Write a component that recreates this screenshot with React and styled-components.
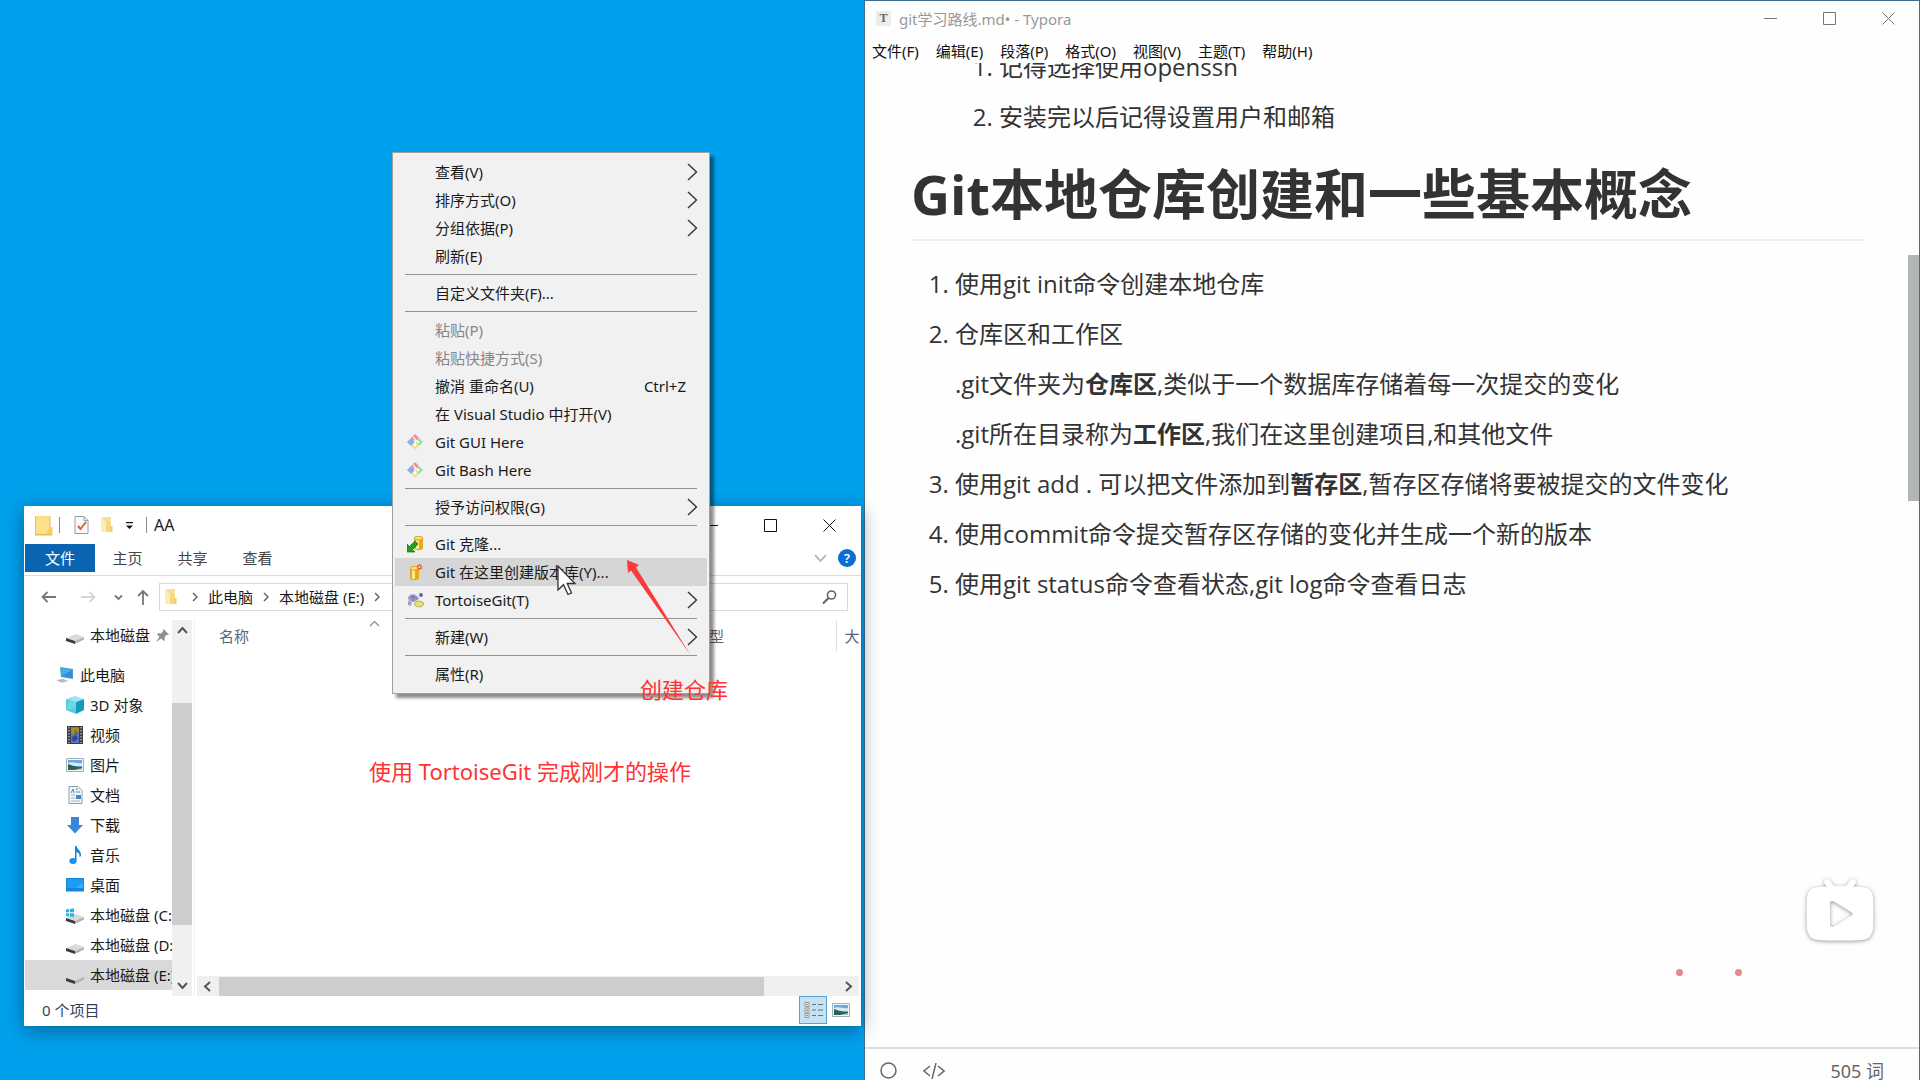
// App.jsx
import React from "react";
import styled, { createGlobalStyle } from "styled-components";

const GlobalStyle = createGlobalStyle`
  * {
    box-sizing: border-box;
  }
  body {
    margin: 0;
    overflow: hidden;
    font-family: "Noto Sans", "Noto Sans CJK SC", sans-serif;
    font-size: 15px;
    line-height: 20px;
    color: #1a1a1a;
  }
  button, input {
    font: inherit;
    color: inherit;
    border: 0;
    padding: 0;
    margin: 0;
    background: none;
  }
  svg {
    display: block;
    flex-shrink: 0;
  }
`;

/* ---------- icons ---------- */

const Line = ({ d, w = 16, h = 16, color = "#555", width = 1.5 }) => (
  <svg width={w} height={h} viewBox={`0 0 ${w} ${h}`} fill="none" stroke={color} strokeWidth={width}>
    <path d={d} />
  </svg>
);

const ChevronRight = () => <Line w={6} h={10} d="M1 1l4 4-4 4" color="#666" />;
const SubmenuArrow = () => <Line w={11} h={18} d="M1 1l8.500 8-8.500 8" color="#333" width={1.4} />;

const FolderIcon = () => (
  <svg width="18" height="21" viewBox="0 0 18 21">
    <path d="M0 1h15v19H0z" fill="#fbd978" />
    <path d="M1 2h13v17H1z" fill="#fde08a" />
    <path d="M14 12h3.500v8H11z" fill="#f6cf62" />
    <path d="M0 19h17v1.500H0z" fill="#e9bd50" />
    <path d="M.5 1v19M15 1v11" stroke="#e6c264" />
  </svg>
);

const SmallFolderIcon = () => (
  <svg width="12" height="16" viewBox="0 0 12 16">
    <path d="M1 0h9v15H1z" fill="#fbe09a" />
    <path d="M0 1l5 3v12l-5-2z" fill="#fdebb4" />
    <path d="M9 9h2.500v6H7z" fill="#f3cc6c" />
    <path d="M5 4h4v11H5z" fill="#f8d784" />
  </svg>
);

const CheckPageIcon = () => (
  <svg width="15" height="18" viewBox="0 0 15 18">
    <path d="M1 .5h9l4 4v13H1z" fill="#fbfbfd" stroke="#9a9aa6" />
    <path d="M10 .5v4h4" fill="none" stroke="#9a9aa6" />
    <path d="M4 10l2.500 3L12 6" fill="none" stroke="#d8602c" strokeWidth="2" />
  </svg>
);

const DriveShape = () => (
  <>
    <path d="M0 13l10-4 8 3-9 4z" fill="#dadada" />
    <path d="M0 13l9 3v3l-9-3z" fill="#3a3a3a" />
    <path d="M9 16l9-4v2.500L9 19z" fill="#b2b2b2" />
  </>
);

const DriveIcon = () => (
  <svg width="18" height="20" viewBox="0 0 18 20"><DriveShape /></svg>
);

const SystemDriveIcon = () => (
  <svg width="18" height="20" viewBox="0 0 18 20">
    <DriveShape />
    <path d="M0 4.500l3.200-.5v3.300H0zM4 3.900l4-.6v4H4zM0 8.200h3.200v3.300L0 11zM4 8.200h4v4l-4-.6z" fill="#20b8ea" />
  </svg>
);

const ComputerIcon = () => (
  <svg width="18" height="18" viewBox="0 0 18 18">
    <path d="M4 1l13 2v10L5 11z" fill="#5a93bd" />
    <path d="M5 2l11 2v8L6 10z" fill="#39b0f0" />
    <path d="M6 10L16 4v8z" fill="#2791d6" />
    <path d="M0 14l8-1 5 2-7 2z" fill="#cfd5da" />
    <path d="M2 14.500l6-.8M4 15.500l6-.8" stroke="#98a2ab" strokeWidth=".8" />
  </svg>
);

const CubeIcon = () => (
  <svg width="18" height="18" viewBox="0 0 18 18">
    <path d="M0 3l9-3 9 3-8 3z" fill="#9de4f0" />
    <path d="M0 3l10 3v12l-10-4z" fill="#57cbe0" />
    <path d="M10 6l8-3v11l-8 4z" fill="#129dbb" />
    <path d="M4 1.700L10 6v6L0 14z" fill="#7edbeb" opacity=".6" />
  </svg>
);

const VideoIcon = () => (
  <svg width="16" height="18" viewBox="0 0 16 18">
    <path d="M0 0h16v18H0z" fill="#3c3c44" />
    <path d="M4 1h8v16H4z" fill="#5b74c4" />
    <path d="M4 2h8v4l-4 3-4-2z" fill="#b08a2c" />
    <path d="M8 3l3 4-4 3z" fill="#4b7d36" />
    <path d="M5 11l4-2 2 4-5 3z" fill="#2e4694" />
    <path d="M2 1v16M14 1v16" stroke="#aaa" strokeWidth="1.500" strokeDasharray="1.500 1.500" />
  </svg>
);

const PictureIcon = () => (
  <svg width="18" height="14" viewBox="0 0 18 14">
    <path d="M.5.5h17v13H.5z" fill="#f4f8fa" stroke="#9fb0b8" />
    <path d="M2 2h14v10H2z" fill="#6aa7e0" />
    <path d="M2 5c5-2 9 1 14 0v3H2z" fill="#d7e9f5" />
    <path d="M2 6c4 1 7 3 14 3v3H2z" fill="#2f6257" />
    <path d="M8 12l8-2v2z" fill="#9fc3cf" />
  </svg>
);

const DocumentIcon = () => (
  <svg width="15" height="18" viewBox="0 0 15 18">
    <path d="M1 .5h9l4 4v13H1z" fill="#f3f7fa" stroke="#8aa0ae" />
    <path d="M3 7l2-4 1 4M8 3h2M8 6h4" stroke="#3f87c5" fill="none" />
    <path d="M3 9h4M3 12h4M3 15h9" stroke="#9ab4c6" />
    <path d="M8 9h5v4H8z" fill="#3f87c5" />
  </svg>
);

const DownloadIcon = () => (
  <svg width="16" height="17" viewBox="0 0 16 17">
    <path d="M4 0h8v8h4l-8 8.500L0 8h4z" fill="#3a86d8" />
  </svg>
);

const MusicIcon = () => (
  <svg width="13" height="18" viewBox="0 0 13 18">
    <path d="M6 0h1.500c.5 3.500 5 4.500 4.500 10l-1.500 1c.3-3-1-4.500-3-5v9H6z" fill="#1683d8" />
    <ellipse cx="4" cy="15" rx="3.600" ry="2.900" fill="#1b90e6" />
  </svg>
);

const DesktopIcon = () => (
  <svg width="18" height="14" viewBox="0 0 18 14">
    <path d="M0 0h18v13.500H0z" fill="#0f86e0" />
    <path d="M1 1h16v9H1z" fill="#1e9bf5" />
    <path d="M10 10l7-5v5z" fill="#3fb0ff" />
  </svg>
);

const PinIcon = () => (
  <svg width="13" height="13" viewBox="0 0 13 13">
    <path d="M7.500 0L13 5.500l-1.300.6-.9-.4-2.200 2.400.2 3-1 1-2.700-2.700L.8 12.500 0 13l.5-.8 3-4.400L1 5.200l1-1 3 .2L7.300 2l-.4-.9z" fill="#8a8f96" />
  </svg>
);

const SearchIcon = () => (
  <svg width="15" height="15" viewBox="0 0 15 15" fill="none" stroke="#666">
    <circle cx="9.500" cy="5" r="4" strokeWidth="1.600" />
    <path d="M6.500 8L1 13.500" strokeWidth="2.200" />
  </svg>
);

const DetailsViewIcon = () => (
  <svg width="19" height="18" viewBox="0 0 19 18" fill="none">
    <path d="M1 1.500h4v4H1zM1 7h4v4H1zM1 12.500h4v4H1z" fill="#fff" stroke="#8d8d8d" strokeWidth=".9" />
    <path d="M2.500 3.500h1M2.500 9h1M2.500 14.500h1" stroke="#222" strokeWidth="1.400" />
    <path d="M8 3.500h4M14 3.500h5M8 9h4M14 9h5M8 14.500h4M14 14.500h5" stroke="#5b7686" />
  </svg>
);

const GitIcon = () => (
  <svg width="16" height="16" viewBox="0 0 16 16">
    <path d="M8 0l4 4-4 4-4-4z" fill="#ee8d96" />
    <path d="M4 4l4 4-4 4-4-4z" fill="#8fabea" />
    <path d="M12 4l4 4-4 4-4-4z" fill="#9fdc98" />
    <path d="M8 8l4 4-4 4-4-4z" fill="#f2e28d" />
    <path d="M6 2.500l2 2.500v6M8 5.500l3 2.500" stroke="#fff" strokeWidth="1.200" fill="none" />
    <circle cx="8" cy="11" r="1.300" fill="#fff" />
    <circle cx="11" cy="8" r="1.300" fill="#fff" />
  </svg>
);

const Cylinder = () => (
  <>
    <path d="M0 2v10c0 3 9 3 9 0V2z" fill="#e8a91c" />
    <path d="M2 3v10h3V3z" fill="#fde98a" />
    <ellipse cx="4.500" cy="2.200" rx="4.500" ry="1.900" fill="#fbe06a" stroke="#c68a12" strokeWidth=".7" />
  </>
);

const CloneIcon = () => (
  <svg width="17" height="17" viewBox="0 0 17 17">
    <g transform="translate(7 0)"><Cylinder /></g>
    <path d="M0 16V8l2.500 2.500L8 5l3 3-5.500 5.500L8 16z" fill="#22a022" stroke="#117011" strokeWidth=".7" />
  </svg>
);

const CreateRepoIcon = () => (
  <svg width="17" height="17" viewBox="0 0 17 17">
    <g transform="translate(3 2)"><Cylinder /></g>
    <path d="M12.500 0v6M9.500 3h6M10.500 1l4 4M14.500 1l-4 4" stroke="#f2602a" strokeWidth="1.200" />
    <circle cx="12.500" cy="3" r="1" fill="#ffd9a0" />
  </svg>
);

const TortoiseIcon = () => (
  <svg width="17" height="16" viewBox="0 0 17 16">
    <path d="M1 6c1-5 9-5 11 1l-5 3-5-1z" fill="#9c9ccb" />
    <path d="M3 6l3-2 4 3M6 4v5" stroke="#6f6fa8" fill="none" />
    <circle cx="14" cy="3" r="1.900" fill="#63638f" />
    <path d="M1 9l4 1-1 4-3-1z" fill="#9c9ccb" />
    <ellipse cx="12" cy="12" rx="4.500" ry="2.800" fill="#e4e46e" stroke="#98983a" strokeWidth=".7" />
  </svg>
);

const Minimize = ({ color }) => <Line w={13} h={13} d="M0 6.500h13" color={color} width={1} />;
const Maximize = ({ color }) => <Line w={13} h={13} d="M.5.5h12v12H.5z" color={color} width={1} />;
const Close = ({ color }) => <Line w={13} h={13} d="M.5.5l12 12M12.500.5l-12 12" color={color} width={1} />;

/* ---------- screen ---------- */

const Screen = styled.div`
  display: grid;
  grid-template-columns: 45fr 55fr;
  height: 100vh;
  overflow: hidden;
  background: #00a1ec;
`;

const Desktop = styled.main`
  position: relative;
  z-index: 1;
`;

/* ---------- explorer ---------- */

const Explorer = styled.section`
  position: absolute;
  left: 24px;
  right: 3px;
  top: 506px;
  height: 520px;
  display: flex;
  flex-direction: column;
  background: #fff;
  box-shadow: 0 4px 18px rgba(0, 20, 50, 0.45);
`;

const TitleBar = styled.header`
  display: flex;
  align-items: center;
  height: 38px;
  padding-left: 11px;
`;

const QuickAccess = styled.div`
  display: flex;
  align-items: center;
  height: 20px;
`;

const QuickButton = styled.button`
  display: flex;
  margin-left: ${(p) => p.$gap || 12}px;
`;

const VBar = styled.span`
  width: 1px;
  height: 16px;
  margin-left: ${(p) => p.$gap}px;
  background: #8a8a8a;
`;

const WindowTitle = styled.span`
  margin-left: 7px;
  font-size: 16px;
`;

const WindowButtons = styled.div`
  display: flex;
  gap: ${(p) => p.$gap}px;
  margin-left: auto;
  padding-right: ${(p) => p.$right}px;
`;

const Tabs = styled.nav`
  display: flex;
  align-items: center;
  height: 32px;
  padding: 0 5px 3px 1px;
  border-bottom: 1px solid #dadbdc;
`;

const Tab = styled.button`
  height: 28px;
  width: ${(p) => (p.$active ? 70 : 65)}px;
  color: ${(p) => (p.$active ? "#fff" : "#444")};
  background: ${(p) => (p.$active ? "#0a64b0" : "transparent")};
`;

const RibbonTools = styled.div`
  display: flex;
  align-items: center;
  gap: 11px;
  margin-left: auto;
`;

const HelpButton = styled.button`
  width: 18px;
  height: 18px;
  border-radius: 50%;
  background: #0b6fd0;
  color: #fff;
  font-size: 13px;
  font-weight: 600;
  line-height: 18px;
`;

const AddressRow = styled.div`
  display: flex;
  align-items: center;
  height: 44px;
  padding: 0 13px 2px 17px;
`;

const NavButtons = styled.div`
  display: flex;
  align-items: center;
  width: 118px;
`;

const NavButton = styled.button`
  display: flex;
  margin-right: ${(p) => p.$gap}px;
`;

const Field = styled.div`
  display: flex;
  align-items: center;
  height: 28px;
  border: 1px solid #d9d9d9;
`;

const AddressField = styled(Field)`
  flex: 1;
  gap: 10px;
  padding-left: 5px;
`;

const PathIcon = styled.span`
  margin-right: 5px;
`;

const SearchField = styled(Field)`
  width: 200px;
  margin-left: 12px;
  padding-right: 10px;

  input {
    flex: 1;
    min-width: 0;
    outline: 0;
  }
`;

const Body = styled.div`
  display: flex;
  flex: 1;
  min-height: 0;
`;

const Tree = styled.ul`
  width: 148px;
  margin: 0;
  padding: 0 0 0 1px;
  list-style: none;
  overflow: hidden;
`;

const TreeRow = styled.li`
  display: flex;
  align-items: center;
  gap: 6px;
  height: 30px;
  padding-left: ${(p) => (p.$root ? 31 : 41)}px;
  margin-bottom: ${(p) => (p.$last ? 10 : 0)}px;
  white-space: nowrap;
  overflow: hidden;
  background: ${(p) => (p.$selected ? "#d9d9d9" : "transparent")};
`;

const TreeIcon = styled.span`
  display: flex;
  justify-content: center;
  width: 18px;
  flex-shrink: 0;
`;

const VScroll = styled.div`
  display: flex;
  flex-direction: column;
  align-items: center;
  justify-content: space-between;
  width: 20px;
  padding: 6px 0;
  background: #f0f0f0;
`;

const VThumb = styled.div`
  width: 100%;
  height: 222px;
  margin-top: 12px;
  background: #cdcdcd;
`;

const Files = styled.div`
  display: flex;
  flex-direction: column;
  flex: 1;
  min-width: 0;
  margin-left: 2px;
  padding: 0 2px;
  border-left: 1px solid #f0f0f0;
`;

const FileTable = styled.table`
  width: 100%;
  table-layout: fixed;
  border-collapse: collapse;
  color: #5a6478;

  th {
    height: 32px;
    padding: 0;
    font-weight: 400;
    text-align: left;
    white-space: nowrap;
    overflow: hidden;
  }
  th:first-child {
    padding-left: 22px;
  }
  th:nth-child(2) {
    width: 142px;
  }
  th:last-child {
    width: 23px;
    padding-left: 8px;
    border-left: 1px solid #e0e0e0;
  }
`;

const NameHead = styled.span`
  display: flex;
  align-items: center;
  gap: 120px;
  height: 32px;

  svg {
    align-self: flex-start;
  }
`;

const HScroll = styled.div`
  display: flex;
  align-items: center;
  justify-content: space-between;
  height: 20px;
  margin-top: auto;
  padding: 0 6px;
  background: #f0f0f0;
`;

const HThumb = styled.div`
  width: 545px;
  height: 19px;
  margin-right: auto;
  margin-left: 8px;
  background: #cdcdcd;
`;

const StatusBar = styled.footer`
  display: flex;
  align-items: flex-start;
  height: 30px;
  padding: 0 6px 0 18px;
  line-height: 28px;
  color: #33415c;
`;

const ViewButtons = styled.div`
  display: flex;
  margin-left: auto;
`;

const ViewButton = styled.button`
  display: flex;
  align-items: center;
  justify-content: center;
  width: 28px;
  height: 28px;
  border: 1px solid ${(p) => (p.$active ? "#5aa0c8" : "transparent")};
  background: ${(p) => (p.$active ? "#c5e2f2" : "transparent")};
`;

const treeItems = [
  { label: "本地磁盘", icon: <DriveIcon />, pinned: true, last: true },
  { label: "此电脑", icon: <ComputerIcon />, root: true },
  { label: "3D 对象", icon: <CubeIcon /> },
  { label: "视频", icon: <VideoIcon /> },
  { label: "图片", icon: <PictureIcon /> },
  { label: "文档", icon: <DocumentIcon /> },
  { label: "下载", icon: <DownloadIcon /> },
  { label: "音乐", icon: <MusicIcon /> },
  { label: "桌面", icon: <DesktopIcon /> },
  { label: "本地磁盘 (C:)", icon: <SystemDriveIcon /> },
  { label: "本地磁盘 (D:)", icon: <DriveIcon /> },
  { label: "本地磁盘 (E:)", icon: <DriveIcon />, selected: true },
];

const ExplorerWindow = () => (
  <Explorer>
    <TitleBar>
      <QuickAccess>
        <FolderIcon />
        <VBar $gap={6} />
        <QuickButton $gap={14} aria-label="属性"><CheckPageIcon /></QuickButton>
        <QuickButton aria-label="新建文件夹"><SmallFolderIcon /></QuickButton>
        <QuickButton aria-label="自定义快速访问工具栏">
          <svg width="9" height="9" viewBox="0 0 9 9"><path d="M1 1h7v1.300H1zM1 4.500h7L4.500 8z" fill="#111" /></svg>
        </QuickButton>
        <VBar $gap={12} />
      </QuickAccess>
      <WindowTitle>AA</WindowTitle>
      <WindowButtons $gap={46} $right={25}>
        <button aria-label="最小化"><Minimize color="#111" /></button>
        <button aria-label="最大化"><Maximize color="#111" /></button>
        <button aria-label="关闭"><Close color="#111" /></button>
      </WindowButtons>
    </TitleBar>
    <Tabs>
      <Tab $active>文件</Tab>
      <Tab>主页</Tab>
      <Tab>共享</Tab>
      <Tab>查看</Tab>
      <RibbonTools>
        <button aria-label="展开功能区"><Line w={13} h={8} d="M1 1l5.500 6L12 1" color="#aaa" /></button>
        <HelpButton>?</HelpButton>
      </RibbonTools>
    </Tabs>
    <AddressRow>
      <NavButtons>
        <NavButton $gap={23} aria-label="后退"><Line w={16} h={12} d="M15 6H1M6.500 1L1.500 6l5 5" color="#777" width={1.8} /></NavButton>
        <NavButton $gap={18} aria-label="前进"><Line w={16} h={12} d="M1 6h14M9.500 1l5 5-5 5" color="#d5d5d5" width={1.8} /></NavButton>
        <NavButton $gap={14} aria-label="最近位置"><Line w={9} h={7} d="M1 1.500l3.500 3.500L8 1.500" color="#777" width={1.8} /></NavButton>
        <NavButton $gap={0} aria-label="上移"><Line w={12} h={16} d="M6 16V2M1 7l5-5 5 5" color="#777" width={1.8} /></NavButton>
      </NavButtons>
      <AddressField>
        <PathIcon><SmallFolderIcon /></PathIcon>
        <ChevronRight />
        <button>此电脑</button>
        <ChevronRight />
        <button>本地磁盘 (E:)</button>
        <ChevronRight />
      </AddressField>
      <SearchField>
        <input type="search" aria-label="搜索" />
        <SearchIcon />
      </SearchField>
    </AddressRow>
    <Body>
      <Tree>
        {treeItems.map((item) => (
          <TreeRow key={item.label} $root={item.root} $last={item.last} $selected={item.selected}>
            <TreeIcon>{item.icon}</TreeIcon>
            {item.label}
            {item.pinned && <PinIcon />}
          </TreeRow>
        ))}
      </Tree>
      <VScroll>
        <Line w={11} h={8} d="M1 7l4.500-5L10 7" width={2} />
        <VThumb />
        <Line w={11} h={8} d="M1 1l4.500 5L10 1" width={2} />
      </VScroll>
      <Files>
        <FileTable>
          <thead>
            <tr>
              <th><NameHead>名称<Line w={11} h={7} d="M1 6l4.500-4.500L10 6" color="#8a8a8a" width={1.2} /></NameHead></th>
              <th>类型</th>
              <th>大小</th>
            </tr>
          </thead>
        </FileTable>
        <HScroll>
          <Line w={8} h={11} d="M7 1L2 5.500 7 10" width={2} />
          <HThumb />
          <Line w={8} h={11} d="M1 1l5 4.500L1 10" width={2} />
        </HScroll>
      </Files>
    </Body>
    <StatusBar>
      0 个项目
      <ViewButtons>
        <ViewButton $active aria-label="详细信息"><DetailsViewIcon /></ViewButton>
        <ViewButton aria-label="大图标"><PictureIcon /></ViewButton>
      </ViewButtons>
    </StatusBar>
  </Explorer>
);

/* ---------- context menu ---------- */

const Menu = styled.div`
  position: absolute;
  left: 392px;
  top: 152px;
  width: 318px;
  padding: 5px 2px;
  border: 1px solid #a0a0a0;
  background: #f1f1f1;
  box-shadow: 4px 4px 3px rgba(0, 0, 0, 0.45);
`;

const MenuItem = styled.button`
  display: flex;
  align-items: center;
  width: 100%;
  height: 28px;
  padding: 0 9px 0 12px;
  text-align: left;
  color: ${(p) => (p.disabled ? "#868686" : "#1a1a1a")};
  background: ${(p) => (p.$hover ? "#d6d6d6" : "transparent")};
`;

const MenuIcon = styled.span`
  width: 28px;
`;

const Shortcut = styled.span`
  margin-left: auto;
  padding-right: 12px;
`;

const ArrowSlot = styled.span`
  margin-left: auto;
`;

const Separator = styled.hr`
  height: 1px;
  margin: 4px 10px;
  border: 0;
  background: #949494;
`;

const menuGroups = [
  [
    { label: "查看(V)", sub: true },
    { label: "排序方式(O)", sub: true },
    { label: "分组依据(P)", sub: true },
    { label: "刷新(E)" },
  ],
  [{ label: "自定义文件夹(F)..." }],
  [
    { label: "粘贴(P)", disabled: true },
    { label: "粘贴快捷方式(S)", disabled: true },
    { label: "撤消 重命名(U)", shortcut: "Ctrl+Z" },
    { label: "在 Visual Studio 中打开(V)" },
    { label: "Git GUI Here", icon: <GitIcon /> },
    { label: "Git Bash Here", icon: <GitIcon /> },
  ],
  [{ label: "授予访问权限(G)", sub: true }],
  [
    { label: "Git 克隆...", icon: <CloneIcon /> },
    { label: "Git 在这里创建版本库(Y)...", icon: <CreateRepoIcon />, hover: true },
    { label: "TortoiseGit(T)", icon: <TortoiseIcon />, sub: true },
  ],
  [{ label: "新建(W)", sub: true }],
  [{ label: "属性(R)" }],
];

const ContextMenu = () => (
  <Menu>
    {menuGroups.map((group, i) => (
      <React.Fragment key={i}>
        {i > 0 && <Separator />}
        {group.map((item) => (
          <MenuItem key={item.label} disabled={item.disabled} $hover={item.hover}>
            <MenuIcon>{item.icon}</MenuIcon>
            {item.label}
            {item.shortcut && <Shortcut>{item.shortcut}</Shortcut>}
            {item.sub && <ArrowSlot><SubmenuArrow /></ArrowSlot>}
          </MenuItem>
        ))}
      </React.Fragment>
    ))}
  </Menu>
);

/* ---------- overlays ---------- */

const Note = styled.p`
  position: absolute;
  left: ${(p) => p.$x}px;
  top: ${(p) => p.$y}px;
  margin: 0;
  font-size: 22px;
  line-height: 32px;
  white-space: nowrap;
  color: #ff3333;
`;

const RedArrow = styled.svg`
  position: absolute;
  left: 626px;
  top: 560px;
`;

const Cursor = styled.svg`
  position: absolute;
  left: 557px;
  top: 565px;
`;

/* ---------- typora ---------- */

const Typora = styled.section`
  display: flex;
  flex-direction: column;
  min-width: 0;
  min-height: 0;
  border: 1px solid #3f6f90;
  border-bottom: 0;
  background: #fefefe;
`;

const TyporaTitle = styled.header`
  display: flex;
  align-items: center;
  height: 35px;
  padding-left: 11px;
  color: #999;
`;

const TyporaLogo = styled.span`
  width: 15px;
  height: 15px;
  margin-right: 8px;
  background: #ececec;
  color: #666;
  font-family: "Liberation Serif", serif;
  font-size: 12px;
  font-weight: 700;
  line-height: 15px;
  text-align: center;
`;

const MenuBar = styled.nav`
  display: flex;
  align-items: center;
  gap: 17px;
  height: 27px;
  padding: 2px 0 0 7px;
  color: #111;
`;

const Viewport = styled.div`
  display: flex;
  flex: 1;
  min-height: 0;
  overflow: hidden;
`;

const Article = styled.article`
  flex: 1;
  padding: 0 43px 0 46px;
  color: #333;
  font-family: "Open Sans", "Noto Sans CJK SC", sans-serif;
  font-size: 24px;
  line-height: 38px;

  /* the page is scrolled a little way into its first list */
  margin-top: -15px;

  h1 {
    margin: 26px 0 24px;
    padding-bottom: 12px;
    border-bottom: 2px solid #eee;
    font-size: 54px;
    line-height: 65px;
    font-weight: 700;
  }
  p {
    margin: 0 0 12px;
  }
`;

const List = styled.ol`
  margin: 0;
  padding-left: ${(p) => (p.$nested ? 88 : 44)}px;
`;

const PageScroll = styled.div`
  width: 11px;
  padding-top: 192px;
`;

const PageThumb = styled.div`
  height: 246px;
  background: #b0b5b5;
`;

const TyporaStatus = styled.footer`
  display: flex;
  align-items: center;
  gap: 26px;
  height: 33px;
  padding: 12px 35px 0 15px;
  border-top: 2px solid #dadfdf;
  font-size: 18px;
  color: #666;
`;

const WordCount = styled.button`
  margin-left: auto;
`;

const PlayerBadge = styled.svg`
  position: absolute;
  right: 38px;
  bottom: 129px;
`;

const PinkDot = styled.span`
  position: absolute;
  right: ${(p) => p.$right}px;
  bottom: 104px;
  width: 7px;
  height: 7px;
  border-radius: 50%;
  background: #e08a90;
`;

const menus = ["文件(F)", "编辑(E)", "段落(P)", "格式(O)", "视图(V)", "主题(T)", "帮助(H)"];

const TyporaWindow = () => (
  <Typora>
    <TyporaTitle>
      <TyporaLogo>T</TyporaLogo>
      git学习路线.md• - Typora
      <WindowButtons $gap={46} $right={24}>
        <button aria-label="最小化"><Minimize color="#777" /></button>
        <button aria-label="最大化"><Maximize color="#777" /></button>
        <button aria-label="关闭"><Close color="#777" /></button>
      </WindowButtons>
    </TyporaTitle>
    <MenuBar>
      {menus.map((m) => (
        <button key={m}>{m}</button>
      ))}
    </MenuBar>
    <Viewport>
      <Article>
        <List $nested>
          <li><p>记得选择使用openssh</p></li>
          <li><p>安装完以后记得设置用户和邮箱</p></li>
        </List>
        <h1>Git本地仓库创建和一些基本概念</h1>
        <List>
          <li><p>使用git init命令创建本地仓库</p></li>
          <li>
            <p>仓库区和工作区</p>
            <p>.git文件夹为<strong>仓库区</strong>,类似于一个数据库存储着每一次提交的变化</p>
            <p>.git所在目录称为<strong>工作区</strong>,我们在这里创建项目,和其他文件</p>
          </li>
          <li><p>使用git add . 可以把文件添加到<strong>暂存区</strong>,暂存区存储将要被提交的文件变化</p></li>
          <li><p>使用commit命令提交暂存区存储的变化并生成一个新的版本</p></li>
          <li><p>使用git status命令查看状态,git log命令查看日志</p></li>
        </List>
      </Article>
      <PageScroll><PageThumb /></PageScroll>
    </Viewport>
    <TyporaStatus>
      <button aria-label="侧边栏">
        <svg width="17" height="17" viewBox="0 0 17 17"><circle cx="8.500" cy="8.500" r="7.500" fill="none" stroke="#666" strokeWidth="1.500" /></svg>
      </button>
      <button aria-label="源代码模式">
        <Line w={22} h={16} d="M7 3L1 8l6 5M15 3l6 5-6 5M13 0L9 16" color="#666" />
      </button>
      <WordCount>505 词</WordCount>
    </TyporaStatus>
  </Typora>
);

const App = () => {
  return (
    <Screen>
      <GlobalStyle />
      <Desktop>
        <ExplorerWindow />
        <ContextMenu />
        <Note $x={640} $y={673}>创建仓库</Note>
        <Note $x={369} $y={755}>使用 TortoiseGit 完成刚才的操作</Note>
        <Cursor width="20" height="32" viewBox="0 0 20 32">
          <path d="M1 1v24l5.500-5.300L11 29.500l3.500-1.600-4.300-9.400H18z" fill="#fff" stroke="#333" strokeWidth="1.300" />
        </Cursor>
        <RedArrow width="66" height="98" viewBox="0 0 66 98">
          <path d="M1 0l12 5-3 2.500L64.500 95 5 10.500 2 13z" fill="#fb3b3b" />
        </RedArrow>
      </Desktop>
      <TyporaWindow />
      <PlayerBadge width="84" height="84" viewBox="0 0 84 84">
        <g filter="drop-shadow(0 1px 2px rgba(0,0,0,.4))">
          <path d="M29 15l5 6M55 15l-5 6" stroke="#fff" strokeWidth="6" strokeLinecap="round" />
          <path fillRule="evenodd" d="M20 20q22-2 44 0q10 1 11 10q1 16 0 32q-1 10-11 11q-22 1-44 0q-10-1-11-11q-1-16 0-32q1-9 11-10zM32 37v20q0 4 4 2.500l17-10.500q3-2 0-4l-17-10.500q-4-1.500-4 2.500z" fill="#fff" />
        </g>
      </PlayerBadge>
      <PinkDot $right={237} />
      <PinkDot $right={178} />
    </Screen>
  );
};

export default App;
